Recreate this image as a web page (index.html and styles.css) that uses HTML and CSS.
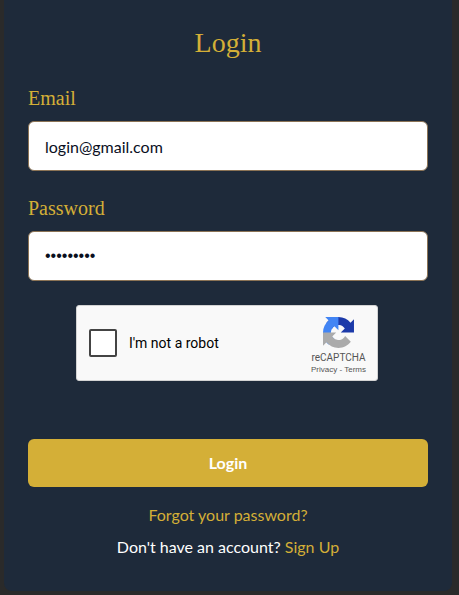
FILE: index.html
```html
<!DOCTYPE html>
<html lang="en">
<head>
<meta charset="utf-8">
<meta name="viewport" content="width=device-width, initial-scale=1">
<title>Login</title>
<link rel="stylesheet" href="styles.css">
</head>
<body>
<main class="card">
  <h1 class="title">Login</h1>
  <form class="form">
    <div class="field">
      <label class="label" for="email">Email</label>
      <input class="input" id="email" type="email" value="login@gmail.com">
    </div>
    <div class="field">
      <label class="label" for="password">Password</label>
      <input class="input input-password" id="password" type="password" value="password1">
    </div>
    <div class="captcha">
      <input class="captcha-box" id="robot" type="checkbox">
      <label class="captcha-label" for="robot">I'm not a robot</label>
      <div class="captcha-brand">
        <svg class="captcha-logo" viewBox="0 0 64 64" aria-hidden="true">
          <path fill="#1c3aa9" d="M64 31.955l-.033-1.37V4.687l-7.16 7.16C50.948 4.674 42.033.093 32.05.093c-10.4 0-19.622 4.96-25.458 12.64l11.736 11.86a15.55 15.55 0 0 1 4.754-5.334c2.05-1.6 4.952-2.906 8.968-2.906.485 0 .86.057 1.135.163 4.976.393 9.288 3.14 11.828 7.124l-8.307 8.307z"/>
          <path fill="#4285f4" d="M31.862.094l-1.37.033H4.594l7.16 7.16C4.58 13.146 0 22.06 0 32.045c0 10.4 4.96 19.622 12.64 25.458L24.5 45.767a15.55 15.55 0 0 1-5.334-4.754c-1.6-2.05-2.906-4.952-2.906-8.968 0-.485.057-.86.163-1.135.393-4.976 3.14-9.288 7.124-11.828l8.307 8.307z"/>
          <path fill="#ababab" d="M.001 32.045l.033 1.37v25.898l7.16-7.16c5.86 7.173 14.774 11.754 24.76 11.754 10.392 0 19.626-4.96 25.458-12.64L45.676 39.407a15.55 15.55 0 0 1-4.754 5.334c-2.05 1.6-4.952 2.906-8.968 2.906-.485 0-.86-.057-1.135-.163-4.976-.393-9.288-3.14-11.828-7.124l8.307-8.307z"/>
        </svg>
        <span class="captcha-name">reCAPTCHA</span>
        <span class="captcha-terms"><a href="#">Privacy</a> - <a href="#">Terms</a></span>
      </div>
    </div>
    <button class="submit" type="submit">Login</button>
  </form>
  <p class="note"><a class="link" href="#">Forgot your password?</a></p>
  <p class="note">Don't have an account? <a class="link" href="#">Sign Up</a></p>
</main>
</body>
</html>
```
FILE: styles.css
```css
* {
  box-sizing: border-box;
}

body {
  margin: 0;
  padding: 0 7px 4px 4px;
  background: #2a2a2a;
  color: #fff;
  font: 16px/24px Lato, sans-serif;
}

.card {
  padding: 25px 24px 24px;
  border-radius: 0 0 8px 8px;
  background: #1e2a3a;
}

.title {
  margin: 0 0 24px;
  color: #d4af37;
  font: 28px/36px "Liberation Serif", serif;
  text-align: center;
}

.form {
  display: flex;
  flex-direction: column;
}

.field {
  margin-bottom: 24px;
}

.label {
  display: block;
  margin-bottom: 10px;
  color: #d4af37;
  font: 20px/26px "Liberation Serif", serif;
}

.input {
  display: block;
  width: 100%;
  height: 50px;
  padding: 0 16px;
  border: 1px solid #8b7355;
  border-radius: 6px;
  background: #fff;
  color: #0a0f1e;
  font: inherit;
}

.input-password {
  font-family: "Liberation Sans", sans-serif;
}

.captcha {
  display: flex;
  align-items: center;
  align-self: center;
  width: 302px;
  height: 76px;
  margin: 0 2px 58px 0;
  padding: 0 11px 0 12px;
  border: 1px solid #d3d3d3;
  border-radius: 3px;
  background: #f9f9f9;
  color: #000;
  font: 14px/17px Roboto, sans-serif;
}

.captcha-box {
  appearance: none;
  width: 28px;
  height: 28px;
  margin: 0 12px 0 0;
  border: 2px solid #444;
  border-radius: 2px;
  background: #fff;
}

.captcha-brand {
  display: flex;
  flex-direction: column;
  align-items: center;
  margin-left: auto;
  padding-top: 6px;
  color: #555;
}

.captcha-logo {
  width: 31px;
  height: 31px;
  margin-bottom: 4px;
}

.captcha-name {
  font-size: 10px;
  line-height: 12px;
}

.captcha-terms {
  font: 8px/12px "Liberation Sans", sans-serif;
}

.captcha-terms a {
  color: inherit;
  text-decoration: none;
}

.submit {
  height: 48px;
  margin-bottom: 16px;
  border: 0;
  border-radius: 6px;
  background: #d4af37;
  color: #fff;
  font: bold 16px/24px Lato, sans-serif;
}

.note {
  margin: 0 0 8px;
  text-align: center;
}

.link {
  color: #d4af37;
  text-decoration: none;
}
```
